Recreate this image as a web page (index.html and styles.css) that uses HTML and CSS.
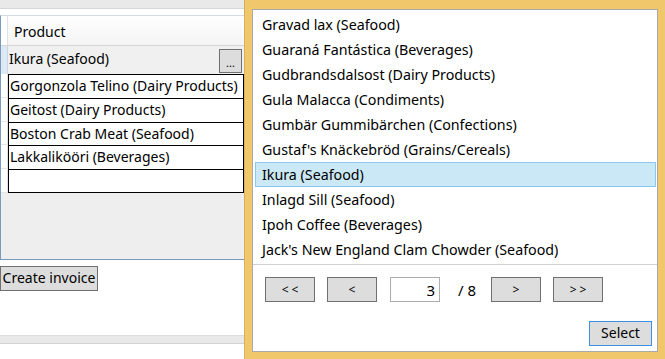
FILE: index.html
```
<!DOCTYPE html>
<html lang="en">
<head>
    <meta charset="UTF-8">
    <title>Invoice</title>
    <link rel="stylesheet" href="styles.css">
</head>
<body>
<div class="page">
    <div class="topbar"></div>

    <div class="grid">
        <div class="grid-head">
            <div class="rh"></div>
            <div class="col-head">Product</div>
        </div>
        <div class="edit-row">
            <div class="rh rh-current"></div>
            <div class="edit-cell">
                <span>Ikura (Seafood)</span>
                <button class="ellipsis">...</button>
            </div>
        </div>
        <div class="rows">
            <div class="row"><div class="rh"></div><div class="cell">Gorgonzola Telino (Dairy Products)</div></div>
            <div class="row"><div class="rh"></div><div class="cell">Geitost (Dairy Products)</div></div>
            <div class="row short"><div class="rh"></div><div class="cell">Boston Crab Meat (Seafood)</div></div>
            <div class="row"><div class="rh"></div><div class="cell">Lakkalikööri (Beverages)</div></div>
            <div class="row last"><div class="rh"></div><div class="cell"></div></div>
        </div>
    </div>

    <button class="create">Create invoice</button>

    <div class="bottombar"></div>
</div>

<div class="popup">
    <div class="panel">
        <ul class="list">
            <li>Gravad lax (Seafood)</li>
            <li>Guaraná Fantástica (Beverages)</li>
            <li>Gudbrandsdalsost (Dairy Products)</li>
            <li>Gula Malacca (Condiments)</li>
            <li>Gumbär Gummibärchen (Confections)</li>
            <li>Gustaf's Knäckebröd (Grains/Cereals)</li>
            <li class="selected">Ikura (Seafood)</li>
            <li>Inlagd Sill (Seafood)</li>
            <li>Ipoh Coffee (Beverages)</li>
            <li>Jack's New England Clam Chowder (Seafood)</li>
        </ul>

        <div class="pager">
            <button class="page-btn">&lt;&lt;</button>
            <button class="page-btn">&lt;</button>
            <input class="page-input" type="text" value="3">
            <span class="page-total">/ 8</span>
            <button class="page-btn">&gt;</button>
            <button class="page-btn">&gt;&gt;</button>
        </div>

        <div class="actions">
            <button class="select">Select</button>
        </div>
    </div>
</div>
</body>
</html>
```

FILE: styles.css
```
* {
    margin: 0;
    padding: 0;
    box-sizing: border-box;
}

ul, li {
    list-style: none;
}

body {
    width: 665px;
    height: 359px;
    overflow: hidden;
    position: relative;
    background: #ffffff;
    font-family: "Segoe UI", "Noto Sans", sans-serif;
    font-size: 14px;
    color: #000000;
}

button, input {
    font-family: inherit;
    font-size: inherit;
    color: inherit;
}

/* left side: the invoice form */
.page {
    width: 244px;
}

.topbar {
    height: 9px;
    background: #e9e9e9;
    border-bottom: 1px solid #d6d6d6;
}

.grid {
    margin-top: 6px;
    height: 245px;
    background: #eeeeee;
    border: 1px solid #7a99bc;
    border-top-color: #d3dbe4;
    border-right: none;
}

.rh {
    width: 7px;
    flex: none;
    background: #ffffff;
    border-right: 1px solid #e2e2e2;
}

.grid-head {
    display: flex;
    height: 30px;
    border-bottom: 1px solid #d5d5d5;
    background: #ffffff;
}

.col-head {
    flex: 1;
    padding: 6px 0 0 6px;
    background: linear-gradient(to bottom, #ffffff 0%, #f4f4f4 100%);
}

.edit-row {
    display: flex;
    height: 28px;
}

.rh-current {
    background: #dde9f4;
    border-right-color: #c4d7ea;
}

.edit-cell {
    flex: 1;
    display: flex;
    align-items: center;
    justify-content: space-between;
    padding: 0 2px 0 1px;
    background: #f0f0f0;
}

.edit-cell span {
    padding-bottom: 4px;
}

.ellipsis {
    width: 23px;
    height: 24px;
    margin-top: 1px;
    border: 1px solid #707070;
    background: #dddddd;
    font-size: 11px;
    line-height: 26px;
}

.row {
    display: flex;
    height: 24px;
}

.row.short {
    height: 23px;
}

.row .rh {
    border-bottom: 1px solid #e6e6e6;
}

.cell {
    flex: 1;
    padding: 0 0 0 1px;
    line-height: 22px;
    background: #ffffff;
    border-top: 1px solid #000000;
    border-left: 1px solid #000000;
    border-right: 1px solid #000000;
    white-space: nowrap;
    overflow: hidden;
}

.row.last .cell {
    border-bottom: 1px solid #000000;
}

.create {
    display: block;
    margin-top: 6px;
    width: 98px;
    height: 25px;
    padding: 0 1px 2px;
    border: 1px solid #707070;
    background: #dddddd;
    white-space: nowrap;
}

.bottombar {
    margin-top: 44px;
    height: 9px;
    background: #e9e9e9;
    border-top: 1px solid #dcdcdc;
    border-bottom: 1px solid #d2d2d2;
}

/* the product picker popup */
.popup {
    position: absolute;
    left: 244px;
    top: 0;
    width: 421px;
    height: 359px;
    padding: 9px 7px 7px 7px;
    background: #f0c86b;
    border-left: 1px solid #d6b05b;
}

.panel {
    height: 100%;
    display: flex;
    flex-direction: column;
    background: #ffffff;
    border: 1px solid #a9a9a9;
}

.list {
    height: 255px;
    padding: 2px 1px 2px 2px;
    border-bottom: 1px solid #d0d0d0;
    font-size: 14.25px;
}

.list li {
    height: 25px;
    padding-left: 6px;
    line-height: 23px;
    border: 1px solid transparent;
    white-space: nowrap;
}

.list li.selected {
    background: #cbe8f6;
    border-color: #8cc8ec;
}

.pager {
    display: flex;
    align-items: center;
    margin: 12px 0 0 12px;
    height: 25px;
}

.page-btn {
    width: 50px;
    height: 25px;
    border: 1px solid #707070;
    background: #dddddd;
    font-size: 12px;
    letter-spacing: 3px;
    text-indent: 3px;
    margin-right: 12px;
}

.page-btn:nth-child(2) {
    margin-right: 13px;
}

.page-input {
    width: 50px;
    height: 25px;
    border: 1px solid #abadb3;
    padding-right: 4px;
    text-align: right;
    outline: none;
    font-size: 15px;
}

.page-total {
    width: 20px;
    margin: 0 13px 0 18px;
    white-space: nowrap;
    font-size: 15px;
}

.actions {
    display: flex;
    justify-content: flex-end;
    margin: 19px 5px 0 0;
}

.select {
    width: 63px;
    height: 25px;
    border: 1px solid #3c8fe4;
    background: #dddddd;
    padding-bottom: 2px;
}
```
